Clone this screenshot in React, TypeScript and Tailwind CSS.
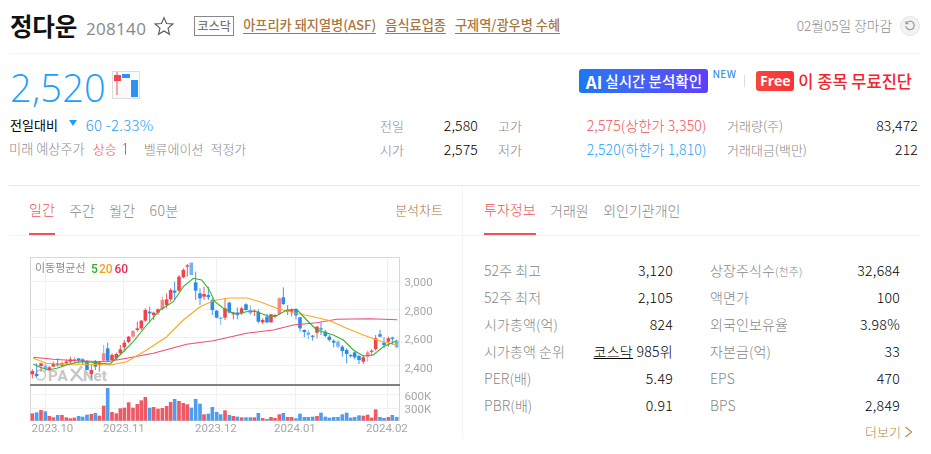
import React from "react";

const R = "#f0434f";
const B = "#2a8bef";
type C = [number, number, number, number, number, number];
// [zoom x, wick top, wick bottom, body top, body bottom, 0 red / 1 blue] in 3x crop coordinates
const left: C[] = [
  [37,358,385,363,373,0],[50,340,382,372,378,1],[63,338,365,340,348,0],[76,340,365,347,358,1],[88,348,362,352,360,0],
  [100,335,350,341,350,0],[113,325,350,340,346,1],[126,335,350,340,347,0],[139,328,345,335,340,0],[151,320,342,328,335,0],
  [163,322,340,327,333,0],[176,325,340,325,332,1],[188,325,345,328,335,1],[201,330,360,333,360,1],[214,345,385,360,372,0],
  [226,330,360,333,350,1],[238,335,365,337,345,0],[251,285,335,310,332,0],[263,278,335,295,332,1],[276,310,335,315,330,0],
  [289,308,330,312,325,0],[301,285,315,298,310,0],[313,270,305,278,292,0],[326,258,280,260,276,0],[339,240,265,243,260,0],
  [352,215,245,235,240,0],[364,210,240,212,235,0],[376,175,215,180,212,0],[389,170,218,185,190,1],[401,185,210,188,195,0],
  [414,175,195,178,188,0],[427,140,180,150,178,0],[440,130,175,148,165,0],[452,115,155,120,148,0],[464,95,150,122,128,1],
  [477,75,125,80,122,0],[490,55,85,60,82,0],[502,42,80,46,50,0],[514,38,75,38,75,1],[527,65,150,97,122,1],
  [540,115,165,130,145,1],[552,110,150,132,140,0],[565,110,150,135,142,1],[577,145,195,150,180,1],[590,180,205,182,203,1],
  [602,200,225,203,207,1],[615,145,210,175,203,0],[628,155,190,158,188,1],[640,185,208,188,193,0],[652,172,208,188,195,1],
];
const right: C[] = [
  [65,170,195,175,190,0],[78,160,182,163,180,1],[91,165,195,180,190,1],[103,178,198,182,186,0],[115,178,220,185,215,1],
  [128,205,222,210,217,0],[141,192,220,200,217,1],[153,192,218,193,217,0],[165,192,205,195,200,0],[178,142,195,145,192,0],
  [190,112,165,142,162,1],[203,165,195,180,186,0],[215,175,200,180,185,0],[228,175,208,178,196,1],[240,200,245,202,235,1],
  [253,238,262,240,246,1],[265,240,268,247,255,1],[278,255,272,257,260,1],[291,228,265,230,248,0],[303,218,255,235,238,1],
  [316,240,262,245,258,1],[328,255,275,260,270,1],[341,268,292,272,278,1],[354,270,295,275,290,1],[367,285,320,290,303,1],
  [380,295,340,300,312,1],[392,312,323,315,318,1],[404,305,328,307,322,1],[417,315,342,318,330,1],[430,315,342,322,335,0],
  [443,302,335,307,320,0],[455,298,318,302,305,0],[467,255,302,265,297,0],[480,240,262,253,260,1],[492,262,295,278,285,1],
  [505,260,290,265,275,0],[517,260,285,263,266,1],[530,268,295,272,292,1],
];
const volL = [490,487,480,484,498,502,495,495,502,505,503,498,500,494,492,489,497,467,414,486,490,475,473,457,473,462,451,441,473,471,476,474,468,456,447,453,459,463,473,447,461,493,491,471,486,493,481,495,498,500];
const volR = [502,502,502,502,489,504,507,501,504,493,489,501,501,505,491,501,501,500,498,488,500,503,501,501,493,488,503,501,496,497,494,503,478,501,504,501,495,501];

const lx = (z: number) => 20 + z / 3;
const rx = (z: number) => 220 + z / 3;
const zy = (z: number) => 250 + z / 3;
const line = (l: number[][], r: number[][]) =>
  [...l.map(([x, y]) => [lx(x), zy(y)]), ...r.map(([x, y]) => [rx(x), zy(y)])]
    .map(([x, y]) => `${x.toFixed(1)},${y.toFixed(1)}`)
    .join(" ");

const green = line(
  [[40,342],[60,352],[85,360],[110,355],[140,345],[170,337],[200,335],[240,340],[270,342],[300,315],[340,275],[380,225],[420,180],[460,155],[490,110],[520,85],[545,90],[565,115],[585,155],[610,175],[640,190]],
  [[60,190],[90,183],[110,185],[150,200],[170,197],[200,180],[230,178],[260,210],[290,240],[340,255],[370,270],[400,300],[430,318],[460,315],[490,290],[530,272]]
);
const orange = line(
  [[40,325],[80,340],[120,343],[160,342],[200,343],[270,345],[320,335],[380,300],[440,260],[490,210],[540,170],[580,152],[620,145]],
  [[30,144],[80,144],[120,155],[170,175],[220,188],[270,198],[330,212],[380,235],[430,255],[470,270],[530,285]]
);
const pink = line(
  [[40,322],[100,328],[170,332],[260,335],[320,325],[400,310],[500,283],[580,272]],
  [[0,268],[80,250],[160,240],[220,225],[290,218],[350,208],[450,206],[532,209]]
);

function Chart() {
  const all = [
    ...left.map((c, i) => ({ c, x: lx(c[0]), v: volL[i] })),
    ...right.map((c, i) => ({ c, x: rx(c[0]), v: volR[i] })),
  ];
  return (
    <svg width="414" height="183" viewBox="30 256 414 183" className="block blur-[0.35px]" fontFamily="Roboto, 'Noto Sans', sans-serif" fontWeight="400">
      <rect x="30.5" y="257.5" width="369" height="163" fill="#fff" stroke="#d8d8d8" />
      {[281, 309, 337, 365, 394, 408].map((y) => (
        <line key={y} x1="31" x2="399" y1={y + 0.5} y2={y + 0.5} stroke="#f1f1f1" />
      ))}
      {[45, 123, 216, 295, 387].map((x) => (
        <line key={x} x1={x + 0.5} x2={x + 0.5} y1="258" y2="420" stroke="#f1f1f1" />
      ))}
      <g>
        <circle cx="40.5" cy="375" r="5" fill="none" stroke="#c4c4c4" strokeWidth="1.3" />
        <text x="48" y="380.5" fontSize="15" fontWeight="700" fill="#c6c6c6" letterSpacing="1">PA</text>
        <path d="M71 369 L83 381 M82 366 L71 381" stroke="#c6c6c6" strokeWidth="2.4" fill="none" />
        <text x="83" y="380.5" fontSize="15" fontWeight="700" fill="#c6c6c6">Net</text>
      </g>
      {all.map(({ c, x }, i) => {
        const col = c[5] ? B : R;
        return (
          <g key={i} opacity={i % 7 === 3 ? 0.65 : 1}>
            <line x1={x} x2={x} y1={zy(c[1])} y2={zy(c[2])} stroke={col} strokeWidth="0.9" />
            <rect x={x - 1.8} y={zy(c[3])} width="3.6" height={Math.max(1.2, (c[4] - c[3]) / 3)} fill={col} />
          </g>
        );
      })}
      <polyline points={pink} fill="none" stroke="#ee4d72" strokeWidth="1.1" />
      <polyline points={orange} fill="none" stroke="#fca91e" strokeWidth="1.1" />
      <polyline points={green} fill="none" stroke="#35b52c" strokeWidth="1.1" />
      <rect x="30" y="384" width="370" height="2" fill="#808080" />
      {all.map(({ c, x, v }, i) => (
        <rect key={i} x={x - 1.8} y={zy(v)} width="3.6" height={(512 - v) / 3} fill={c[5] ? "#3f95ee" : "#ee4b57"} opacity="0.92" />
      ))}
      <text x="35" y="272" fontSize="11" fill="#8c8c8c" fontFamily="'Noto Sans CJK KR', sans-serif">이동평균선</text>
      <text x="91" y="272.5" fontSize="12" fontWeight="500" fill="#2fae27">5</text>
      <text x="99" y="272.5" fontSize="12" fontWeight="500" fill="#f8a21a">20</text>
      <text x="114.5" y="272.5" fontSize="12" fontWeight="500" fill="#ea2b5e">60</text>
      {[["3,000", 286], ["2,800", 315], ["2,600", 343], ["2,400", 372], ["600K", 400], ["300K", 413]].map(([t, y]) => (
        <text key={t} x="404.5" y={y} fontSize="11.5" fill="#a6a6a6">{t}</text>
      ))}
      {[["2023.10", 31.5], ["2023.11", 103], ["2023.12", 195], ["2024.01", 274], ["2024.02", 366]].map(([t, x]) => (
        <text key={t} x={x} y="432" fontSize="11.5" fill="#a6a6a6">{t}</text>
      ))}
    </svg>
  );
}

function Kv({ k, v }: { k: React.ReactNode; v: React.ReactNode }) {
  return (
    <div className="flex h-[27px] items-center justify-between text-[14px] tracking-[0.1px]">
      <span className="text-[#888]">{k}</span>
      <span className="text-black tracking-[0.3px]">{v}</span>
    </div>
  );
}

function Stat({ k, v, w, c }: { k: string; v: string; w: string; c?: string }) {
  return (
    <div className={`flex items-center justify-between ${w}`}>
      <span className="text-[#888]">{k}</span>
      <span className={`text-[14px] tracking-[0.15px] ${c ?? "text-black"}`}>{v}</span>
    </div>
  );
}

export default function App() {
  return (
    <div
      className="relative h-[454px] w-[931px] overflow-hidden bg-white pl-[9px] pr-[11px] text-[13px] font-light leading-none"
      style={{ fontFamily: "'Noto Sans CJK KR', 'Noto Sans', sans-serif" }}
    >
      {/* Header */}
      <header className="flex h-[54px] items-center border-b border-[#f4f4f4] pb-[1px]">
        <h1 className="ml-[1px] text-[24.5px] font-bold tracking-[-0.2px] text-[#111]">정다운</h1>
        <span className="ml-[9px] mt-[4px] text-[17px] font-normal tracking-[0.3px] text-[#888]" style={{ fontFamily: "'Open Sans', sans-serif" }}>208140</span>
        <svg className="ml-[8px]" width="20" height="20" viewBox="0 0 20 20">
          <path d="M10 1.6 12.5 7.5 18.8 8 14 12.1 15.5 18.3 10 15 4.5 18.3 6 12.1 1.2 8 7.5 7.5Z" fill="none" stroke="#555" strokeWidth="1.1" />
        </svg>
        <span className="ml-[20px] flex h-[20px] w-[40px] items-center justify-center border border-[#888] text-[12px] font-medium text-[#777]">코스닥</span>
        <a className="ml-[9px] border-b border-[#a8763e] pb-[1px] text-[13.2px] font-medium text-[#a8763e]">아프리카 돼지열병(ASF)</a>
        <a className="ml-[9px] border-b border-[#a8763e] pb-[1px] text-[13.2px] font-medium text-[#a8763e]">음식료업종</a>
        <a className="ml-[9px] border-b border-[#a8763e] pb-[1px] text-[13.2px] font-medium text-[#a8763e]">구제역/광우병 수혜</a>
        <span className="ml-auto text-[13.7px] text-[#8c8c8c]">02월05일 장마감</span>
        <span className="ml-[8px] flex h-[20px] w-[20px] items-center justify-center rounded-full border border-[#e6e6e6] bg-[#f3f3f3]">
          <svg width="12" height="12" viewBox="0 0 12 12" fill="none" stroke="#999" strokeWidth="1.2">
            <path d="M2.4 3.2A4.2 4.2 0 1 1 1.8 6" />
            <path d="M2 1v2.6h2.6" />
          </svg>
        </span>
      </header>

      {/* Summary */}
      <section className="relative h-[132px] border-b border-[#e8e8e8]">
        <div className="flex h-[58px] items-start">
          <span className="ml-[1px] mt-[14px] text-[38px] font-light tracking-[0.2px] text-[#1e9ffb]" style={{ fontFamily: "'Open Sans', sans-serif" }}>2,520</span>
          <svg className="ml-[6px] mt-[17px]" width="28" height="28" viewBox="0 0 28 28">
            <rect x="0.5" y="0.5" width="27" height="27" fill="#fafafa" stroke="#ddd" />
            <line x1="5" x2="5" y1="1" y2="24" stroke="#f4505a" />
            <rect x="2" y="4" width="7" height="6" fill="#f4434d" />
            <rect x="10" y="3" width="8" height="4" fill="#2a93f5" />
            <rect x="19" y="9" width="7" height="17" fill="#2a93f5" />
          </svg>
          <div className="ml-auto mr-[8px] mt-[15px] flex items-center">
            <button className="flex h-[24px] w-[129px] items-center justify-center rounded-[3px] bg-gradient-to-r from-[#1878f3] to-[#5a40fb] text-[14.5px] font-medium text-white">
              <b className="mr-[3px] text-[17px] font-bold">AI</b>실시간 분석확인
            </button>
            <span className="mb-[14px] ml-[4px] text-[10.5px] font-normal tracking-[0.3px] text-[#1a7ff0]">NEW</span>
            <span className="ml-[8px] h-[12px] w-px bg-[#ddd]" />
            <span className="ml-[11px] flex h-[20px] w-[38px] items-center justify-center rounded-[3px] bg-gradient-to-r from-[#f4473c] to-[#fb3038] text-[14px] font-bold text-white" style={{ fontFamily: "'Open Sans', sans-serif" }}>Free</span>
            <span className="ml-[4px] text-[16.5px] font-medium text-[#f5222d]">이 종목 무료진단</span>
          </div>
        </div>
        <div className="flex">
          <div className="w-[371px]">
            <div className="flex h-[24px] items-center">
              <span className="ml-[1px] font-normal text-black">전일대비</span>
              <span className="ml-[11px] mt-[-2px] h-0 w-0 border-x-[4px] border-t-[6px] border-x-transparent border-t-[#1e9ffb]" />
              <span className="ml-[9px] text-[15px] tracking-[0.2px] text-[#1e9ffb]">60 -2.33%</span>
            </div>
            <div className="flex h-[25px] items-center text-[#8c8c8c]">
              <span className="text-[13.2px]">미래 예상주가</span>
              <span className="ml-[8px] text-[#f4505a]">상승</span>
              <svg className="ml-[5px]" width="7" height="13" viewBox="0 0 7 13" fill="none" stroke="#f4505a" strokeWidth="1">
                <path d="M3.5 12.5V1M1 3.5 3.5 1" />
              </svg>
              <span className="ml-[15px]">벨류에이션</span>
              <span className="ml-[7px]">적정가</span>
            </div>
          </div>
          <div className="mt-[1px] grid grid-cols-[118px_229px_192px] grid-rows-[24px_24px] items-center">
            <Stat k="전일" v="2,580" w="w-[98px]" />
            <Stat k="고가" v="2,575(상한가 3,350)" w="w-[208.5px]" c="text-[#f4505a]" />
            <Stat k="거래량(주)" v="83,472" w="w-[191px]" />
            <Stat k="시가" v="2,575" w="w-[98px]" />
            <Stat k="저가" v="2,520(하한가 1,810)" w="w-[208.5px]" c="text-[#1e9ffb]" />
            <Stat k="거래대금(백만)" v="212" w="w-[191px]" />
          </div>
        </div>
      </section>

      {/* Lower panels */}
      <section className="flex">
        <div className="w-[454px] border-r border-[#f4f4f4]">
          <div className="flex h-[50px] items-start justify-between border-b border-[#f4f4f4] pr-[19px] text-[14px]">
            <div className="flex gap-[14.4px] pl-[20px]">
              <span className="flex h-[49px] items-center border-b-2 border-[#f4505a] pb-[2px] text-[#f4505a]">일간</span>
              <span className="flex h-[49px] items-center pb-[2px] text-[#888]">주간</span>
              <span className="flex h-[49px] items-center pb-[2px] text-[#888]">월간</span>
              <span className="flex h-[49px] items-center pb-[2px] tracking-[0.5px] text-[#888]">60분</span>
            </div>
            <span className="flex h-[49px] items-center pb-[2px] text-[13px] text-[#a8763e]">분석차트</span>
          </div>
          <div className="pl-[21px] pt-[20px]">
            <Chart />
          </div>
        </div>
        <div className="relative flex-1">
          <div className="flex h-[50px] gap-[14.5px] border-b border-[#f4f4f4] pl-[21px] text-[14px]">
            <span className="flex h-[49px] items-center border-b-2 border-[#f4505a] pb-[2px] text-[#f4505a]">투자정보</span>
            <span className="flex h-[49px] items-center pb-[2px] text-[#888]">거래원</span>
            <span className="flex h-[49px] items-center pb-[2px] text-[#888]">외인기관개인</span>
          </div>
          <div className="grid grid-cols-[189px_190px] gap-x-[37px] pl-[21px] pt-[20px]">
            <div>
              <Kv k="52주 최고" v="3,120" />
              <Kv k="52주 최저" v="2,105" />
              <Kv k="시가총액(억)" v="824" />
              <Kv k="시가총액 순위" v={<><u>코스닥</u> 985위</>} />
              <Kv k="PER(배)" v="5.49" />
              <Kv k="PBR(배)" v="0.91" />
            </div>
            <div>
              <Kv k={<>상장주식수<span className="text-[11px]">(천주)</span></>} v="32,684" />
              <Kv k="액면가" v="100" />
              <Kv k="외국인보유율" v="3.98%" />
              <Kv k="자본금(억)" v="33" />
              <Kv k="EPS" v="470" />
              <Kv k="BPS" v="2,849" />
            </div>
          </div>
          <div className="mt-[7px] flex items-center justify-end gap-[3px] pr-[7px] text-[13px] text-[#b08a50]">
            더보기
            <svg width="9" height="12" viewBox="0 0 9 12" fill="none" stroke="#b08a50" strokeWidth="1.1">
              <path d="M1.5 1 7.5 6 1.5 11" />
            </svg>
          </div>
        </div>
      </section>
    </div>
  );
}
